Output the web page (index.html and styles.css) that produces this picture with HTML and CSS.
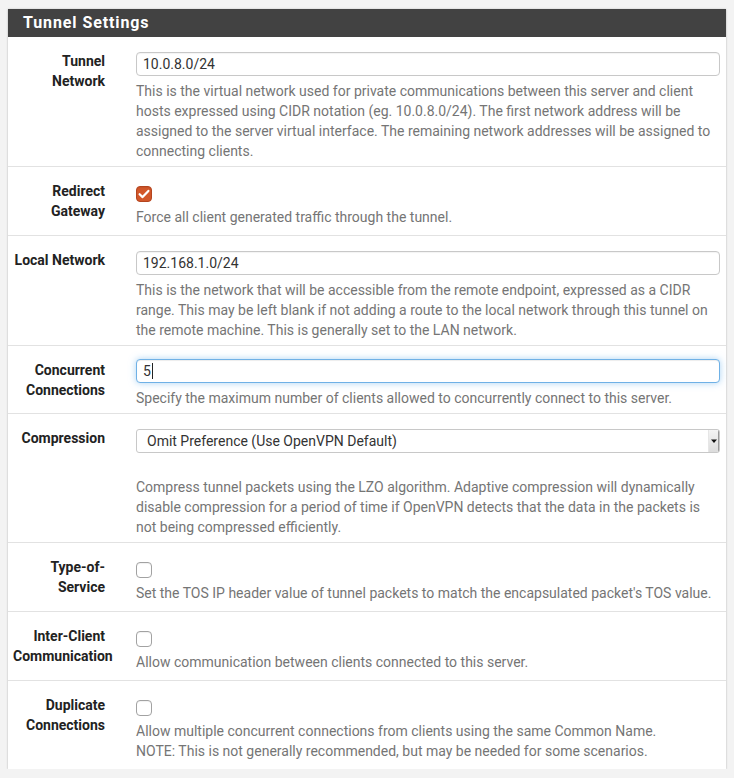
FILE: index.html
```html
<!DOCTYPE html>
<html>
<head>
<meta charset="utf-8">
<title>Tunnel Settings</title>
<link rel="stylesheet" href="styles.css">
</head>
<body>
<div class="panel">
  <div class="panel-heading">Tunnel Settings</div>

  <div class="row">
    <div class="label">Tunnel Network</div>
    <div class="field">
      <input class="text" type="text" value="10.0.8.0/24">
      <div class="help">This is the virtual network used for private communications between this server and client hosts expressed using CIDR notation (eg. 10.0.8.0/24). The first network address will be assigned to the server virtual interface. The remaining network addresses will be assigned to connecting clients.</div>
    </div>
  </div>

  <div class="row">
    <div class="label">Redirect Gateway</div>
    <div class="field check-field">
      <div class="check-line"><span class="check checked"><svg viewBox="0 0 16 16" width="16" height="16"><path d="M3.6 8.2 L6.6 11.1 L12.4 4.9" fill="none" stroke="#fff" stroke-width="2.2" stroke-linecap="round" stroke-linejoin="round"/></svg></span></div>
      <div class="help tight">Force all client generated traffic through the tunnel.</div>
    </div>
  </div>

  <div class="row">
    <div class="label">Local Network</div>
    <div class="field">
      <input class="text" type="text" value="192.168.1.0/24">
      <div class="help">This is the network that will be accessible from the remote endpoint, expressed as a CIDR range. This may be left blank if not adding a route to the local network through this tunnel on the remote machine. This is generally set to the LAN network.</div>
    </div>
  </div>

  <div class="row">
    <div class="label">Concurrent Connections</div>
    <div class="field focus-field">
      <div class="text focus"><span>5</span><span class="caret"></span></div>
      <div class="help">Specify the maximum number of clients allowed to concurrently connect to this server.</div>
    </div>
  </div>

  <div class="row">
    <div class="label">Compression</div>
    <div class="field">
      <div class="select">
        <span>Omit Preference (Use OpenVPN Default)</span>
        <span class="arrow"><svg viewBox="0 0 8 6" width="8" height="6"><path d="M1 1.5 L7 1.5 L4 5 Z" fill="#111"/></svg></span>
      </div>
      <div class="help spaced">Compress tunnel packets using the LZO algorithm. Adaptive compression will dynamically disable compression for a period of time if OpenVPN detects that the data in the packets is not being compressed efficiently.</div>
    </div>
  </div>

  <div class="row">
    <div class="label">Type-of-Service</div>
    <div class="field check-field">
      <div class="check-line"><span class="check"></span></div>
      <div class="help tight">Set the TOS IP header value of tunnel packets to match the encapsulated packet's TOS value.</div>
    </div>
  </div>

  <div class="row">
    <div class="label">Inter-Client Communication</div>
    <div class="field check-field">
      <div class="check-line"><span class="check"></span></div>
      <div class="help tight">Allow communication between clients connected to this server.</div>
    </div>
  </div>

  <div class="row">
    <div class="label">Duplicate Connections</div>
    <div class="field check-field">
      <div class="check-line"><span class="check"></span></div>
      <div class="help tight">Allow multiple concurrent connections from clients using the same Common Name.<br>NOTE: This is not generally recommended, but may be needed for some scenarios.</div>
    </div>
  </div>
</div>
</body>
</html>
```

FILE: styles.css
```css
html, body {
  margin: 0;
  padding: 0;
}
body {
  background: #f3f3f3;
  font-family: Roboto, "Liberation Sans", sans-serif;
  font-size: 14px;
  line-height: 20px;
  color: #222;
  padding: 9px 8px 0 8px;
}
.panel {
  width: 718px;
  background: #fff;
  box-shadow: 0 0 2px rgba(0, 0, 0, 0.18), 0 1px 2px rgba(0, 0, 0, 0.1);
}
.panel-heading {
  background: #424242;
  color: #fff;
  height: 28px;
  line-height: 28px;
  padding: 0 15px;
  font-size: 16px;
  font-weight: 700;
  letter-spacing: 0.9px;
}
.row {
  display: flex;
  border-top: 1px solid #e2e2e2;
}
.row:nth-child(2) {
  border-top: none;
}
.label {
  box-sizing: border-box;
  width: 120px;
  flex: none;
  padding: 14px 23px 0 5px;
  text-align: right;
  font-weight: 700;
  color: #222;
}
.field {
  box-sizing: border-box;
  flex: 1;
  min-width: 0;
  padding: 15px 6px 5px 8px;
}
.field.check-field {
  padding-bottom: 8px;
}
.field.focus-field {
  padding-top: 13px;
}
.text {
  box-sizing: border-box;
  display: flex;
  align-items: center;
  width: 100%;
  height: 24px;
  margin: 0;
  padding: 0 6px;
  border: 1px solid #c8c8c8;
  border-radius: 4px;
  font-family: Roboto, "Liberation Sans", sans-serif;
  font-size: 14px;
  color: #333;
  background: #fff;
  outline: none;
  box-shadow: inset 0 1px 1px rgba(0, 0, 0, 0.05);
}
.text.focus {
  border-color: #6fb1e6;
  box-shadow: inset 0 1px 1px rgba(0, 0, 0, 0.075), 0 0 7px rgba(102, 175, 233, 0.55);
}
.caret {
  display: inline-block;
  width: 1px;
  height: 16px;
  background: #222;
  margin-left: 1px;
}
.help {
  margin-top: 5px;
  color: #757575;
}
.help.tight {
  margin-top: 1px;
}
.help.spaced {
  margin-top: 24px;
}
.check-line {
  height: 24px;
  display: flex;
  align-items: flex-start;
  padding-top: 4px;
  box-sizing: border-box;
}
.check {
  box-sizing: border-box;
  display: block;
  width: 16px;
  height: 16px;
  border: 1px solid #a2a2a2;
  border-radius: 4px;
  background: #fff;
  box-shadow: inset 0 1px 1px rgba(0, 0, 0, 0.06);
}
.check.checked {
  background: #d2572a;
  border-color: #b4451f;
  position: relative;
}
.check.checked svg {
  position: absolute;
  left: -1px;
  top: -1px;
}
.select {
  box-sizing: border-box;
  display: flex;
  align-items: center;
  justify-content: space-between;
  width: 100%;
  height: 24px;
  padding: 0 0 0 10px;
  border: 1px solid #c8c8c8;
  border-radius: 3px;
  color: #333;
  background: #fff;
  overflow: hidden;
}
.arrow {
  box-sizing: border-box;
  width: 11px;
  height: 22px;
  display: flex;
  align-items: center;
  justify-content: center;
  background: linear-gradient(#f4f4f4, #dcdcdc);
  border-left: 1px solid #e6e6e6;
  border-right: 1px solid #9a9a9a;
}
.arrow svg {
  display: block;
}
```
